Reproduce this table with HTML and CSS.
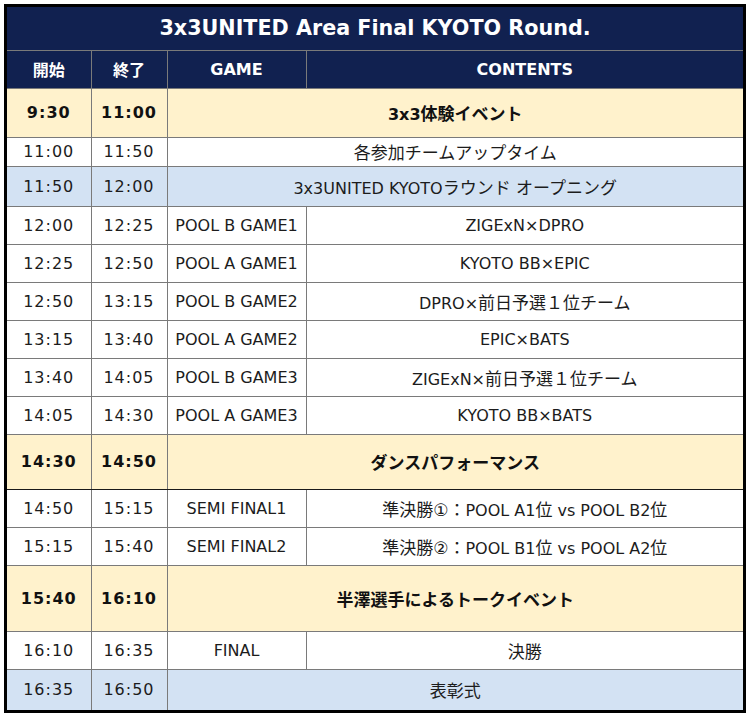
FILE: index.html
```html
<!DOCTYPE html>
<html lang="ja">
<head>
<meta charset="utf-8">
<title>3x3UNITED Area Final KYOTO Round.</title>
<link rel="stylesheet" href="styles.css">
</head>
<body>
<div class="frame">
<table class="sched">
  <colgroup>
    <col class="c-start"><col class="c-end"><col class="c-game"><col class="c-content">
  </colgroup>
  <thead>
    <tr class="r-title"><th colspan="4" class="title">3x3UNITED Area Final KYOTO Round.</th></tr>
    <tr class="r-head"><th>開始</th><th>終了</th><th>GAME</th><th>CONTENTS</th></tr>
  </thead>
  <tbody>
    <tr class="ev h49"><td class="t">9:30</td><td class="t">11:00</td><td colspan="2">3x3<span class="ja">体験イベント</span></td></tr>
    <tr class="h29"><td class="t">11:00</td><td class="t">11:50</td><td colspan="2"><span class="ja">各参加チームアップタイム</span></td></tr>
    <tr class="bl h40"><td class="t">11:50</td><td class="t">12:00</td><td colspan="2">3x3UNITED KYOTO<span class="ja">ラウンド オープニング</span></td></tr>
    <tr class="h38"><td class="t">12:00</td><td class="t">12:25</td><td class="g">POOL B GAME1</td><td>ZIGExN×DPRO</td></tr>
    <tr class="h38"><td class="t">12:25</td><td class="t">12:50</td><td class="g">POOL A GAME1</td><td>KYOTO BB×EPIC</td></tr>
    <tr class="h38"><td class="t">12:50</td><td class="t">13:15</td><td class="g">POOL B GAME2</td><td>DPRO×<span class="ja">前日予選１位チーム</span></td></tr>
    <tr class="h38"><td class="t">13:15</td><td class="t">13:40</td><td class="g">POOL A GAME2</td><td>EPIC×BATS</td></tr>
    <tr class="h38"><td class="t">13:40</td><td class="t">14:05</td><td class="g">POOL B GAME3</td><td>ZIGExN×<span class="ja">前日予選１位チーム</span></td></tr>
    <tr class="h38"><td class="t">14:05</td><td class="t">14:30</td><td class="g">POOL A GAME3</td><td>KYOTO BB×BATS</td></tr>
    <tr class="ev dark h55"><td class="t">14:30</td><td class="t">14:50</td><td colspan="2"><span class="ja">ダンスパフォーマンス</span></td></tr>
    <tr class="h38"><td class="t">14:50</td><td class="t">15:15</td><td class="g">SEMI FINAL1</td><td><span class="ja">準決勝①：</span>POOL A1<span class="ja">位</span> vs POOL B2<span class="ja">位</span></td></tr>
    <tr class="h38"><td class="t">15:15</td><td class="t">15:40</td><td class="g">SEMI FINAL2</td><td><span class="ja">準決勝②：</span>POOL B1<span class="ja">位</span> vs POOL A2<span class="ja">位</span></td></tr>
    <tr class="ev h66"><td class="t">15:40</td><td class="t">16:10</td><td colspan="2"><span class="ja">半澤選手によるトークイベント</span></td></tr>
    <tr class="h38"><td class="t">16:10</td><td class="t">16:35</td><td class="g">FINAL</td><td><span class="ja">決勝</span></td></tr>
    <tr class="bl h41"><td class="t">16:35</td><td class="t">16:50</td><td colspan="2"><span class="ja">表彰式</span></td></tr>
  </tbody>
</table>
</div>
</body>
</html>
```
FILE: styles.css
```css
html, body {
  margin: 0;
  padding: 0;
  background: #ffffff;
}
body {
  font-family: "DejaVu Sans", "Noto Sans CJK JP", sans-serif;
  color: #1c1c1c;
}
.frame {
  margin: 4px 0 0 4px;
  width: 736px;
  border: 3px solid #000;
  background: #fff;
}
.sched {
  width: 736px;
  border-collapse: collapse;
  border-style: hidden;
  table-layout: fixed;
  font-size: 16px;
}
.c-start { width: 84px; }
.c-end { width: 76px; }
.c-game { width: 139px; }
.c-content { width: 437px; }

.sched th,
.sched td {
  border: 1px solid #7a7a7a;
  padding: 0;
  text-align: center;
  vertical-align: middle;
  white-space: nowrap;
  overflow: hidden;
}
.r-title { height: 43px; }
.r-head { height: 38px; }
.sched thead th {
  background: #112150;
  color: #fff;
  font-weight: bold;
}
.title {
  font-size: 20.7px;
  padding-top: 2px;
}
.r-head th { font-size: 16px; }

.t { letter-spacing: 1px; }
.g { text-align: center; }
.ja { font-size: 17px; }

.ev td {
  background: #fff2cc;
  font-weight: bold;
  color: #111;
}
.bl td { background: #d3e2f3; }
.dark td { border-top-color: #1a1a1a; border-bottom-color: #1a1a1a; }

.h29 { height: 29px; }
.h38 { height: 38px; }
.h40 { height: 40px; }
.h41 { height: 41px; }
.h49 { height: 49px; }
.h55 { height: 55px; }
.h66 { height: 66px; }
```
